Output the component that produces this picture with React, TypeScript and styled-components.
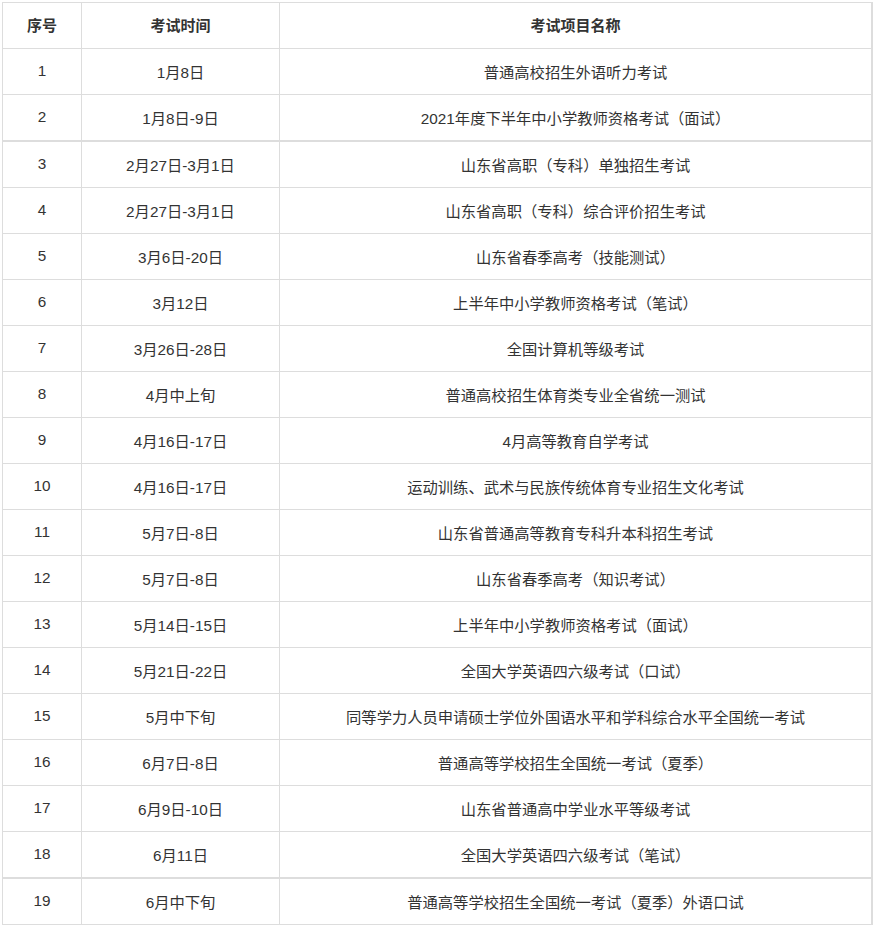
import styled, { createGlobalStyle } from 'styled-components';

const GlobalStyle = createGlobalStyle`
  html, body {
    margin: 0;
    padding: 0;
    background: #fff;
  }
  body {
    font-family: "Liberation Sans", "Noto Sans CJK SC", sans-serif;
    color: #333;
  }
`;

const Page = styled.div`
  padding: 2px 0 0 2px;
`;

const Table = styled.div`
  width: 868px;
  border-top: 1px solid #ddd;
  border-left: 1px solid #ddd;
  border-right: 2px solid #ddd;
`;

const Row = styled.div<{ $thick?: boolean }>`
  display: grid;
  grid-template-columns: 79px 198px 1fr;
  height: ${(p) => (p.$thick ? 47 : 46)}px;
  box-sizing: border-box;
  border-bottom: ${(p) => (p.$thick ? 2 : 1)}px solid #ddd;
`;

const Cell = styled.div<{ $head?: boolean; $last?: boolean }>`
  display: flex;
  align-items: center;
  justify-content: center;
  padding-bottom: 2px;
  font-size: ${(p) => (p.$head ? 15 : 15.3)}px;
  font-weight: ${(p) => (p.$head ? 700 : 400)};
  color: #333;
  border-right: ${(p) => (p.$last ? 'none' : '1px solid #ddd')};
  white-space: nowrap;
`;

const rows: [string, string, string][] = [
  ['1', '1月8日', '普通高校招生外语听力考试'],
  ['2', '1月8日-9日', '2021年度下半年中小学教师资格考试（面试）'],
  ['3', '2月27日-3月1日', '山东省高职（专科）单独招生考试'],
  ['4', '2月27日-3月1日', '山东省高职（专科）综合评价招生考试'],
  ['5', '3月6日-20日', '山东省春季高考（技能测试）'],
  ['6', '3月12日', '上半年中小学教师资格考试（笔试）'],
  ['7', '3月26日-28日', '全国计算机等级考试'],
  ['8', '4月中上旬', '普通高校招生体育类专业全省统一测试'],
  ['9', '4月16日-17日', '4月高等教育自学考试'],
  ['10', '4月16日-17日', '运动训练、武术与民族传统体育专业招生文化考试'],
  ['11', '5月7日-8日', '山东省普通高等教育专科升本科招生考试'],
  ['12', '5月7日-8日', '山东省春季高考（知识考试）'],
  ['13', '5月14日-15日', '上半年中小学教师资格考试（面试）'],
  ['14', '5月21日-22日', '全国大学英语四六级考试（口试）'],
  ['15', '5月中下旬', '同等学力人员申请硕士学位外国语水平和学科综合水平全国统一考试'],
  ['16', '6月7日-8日', '普通高等学校招生全国统一考试（夏季）'],
  ['17', '6月9日-10日', '山东省普通高中学业水平等级考试'],
  ['18', '6月11日', '全国大学英语四六级考试（笔试）'],
  ['19', '6月中下旬', '普通高等学校招生全国统一考试（夏季）外语口试'],
];

const thickAfter = new Set(['2', '18']);

export default function App() {
  return (
    <>
      <GlobalStyle />
      <Page>
        <Table>
          <Row>
            <Cell $head>序号</Cell>
            <Cell $head>考试时间</Cell>
            <Cell $head $last>考试项目名称</Cell>
          </Row>
          {rows.map(([no, date, name]) => (
            <Row key={no} $thick={thickAfter.has(no)}>
              <Cell>{no}</Cell>
              <Cell>{date}</Cell>
              <Cell $last>{name}</Cell>
            </Row>
          ))}
        </Table>
      </Page>
    </>
  );
}
